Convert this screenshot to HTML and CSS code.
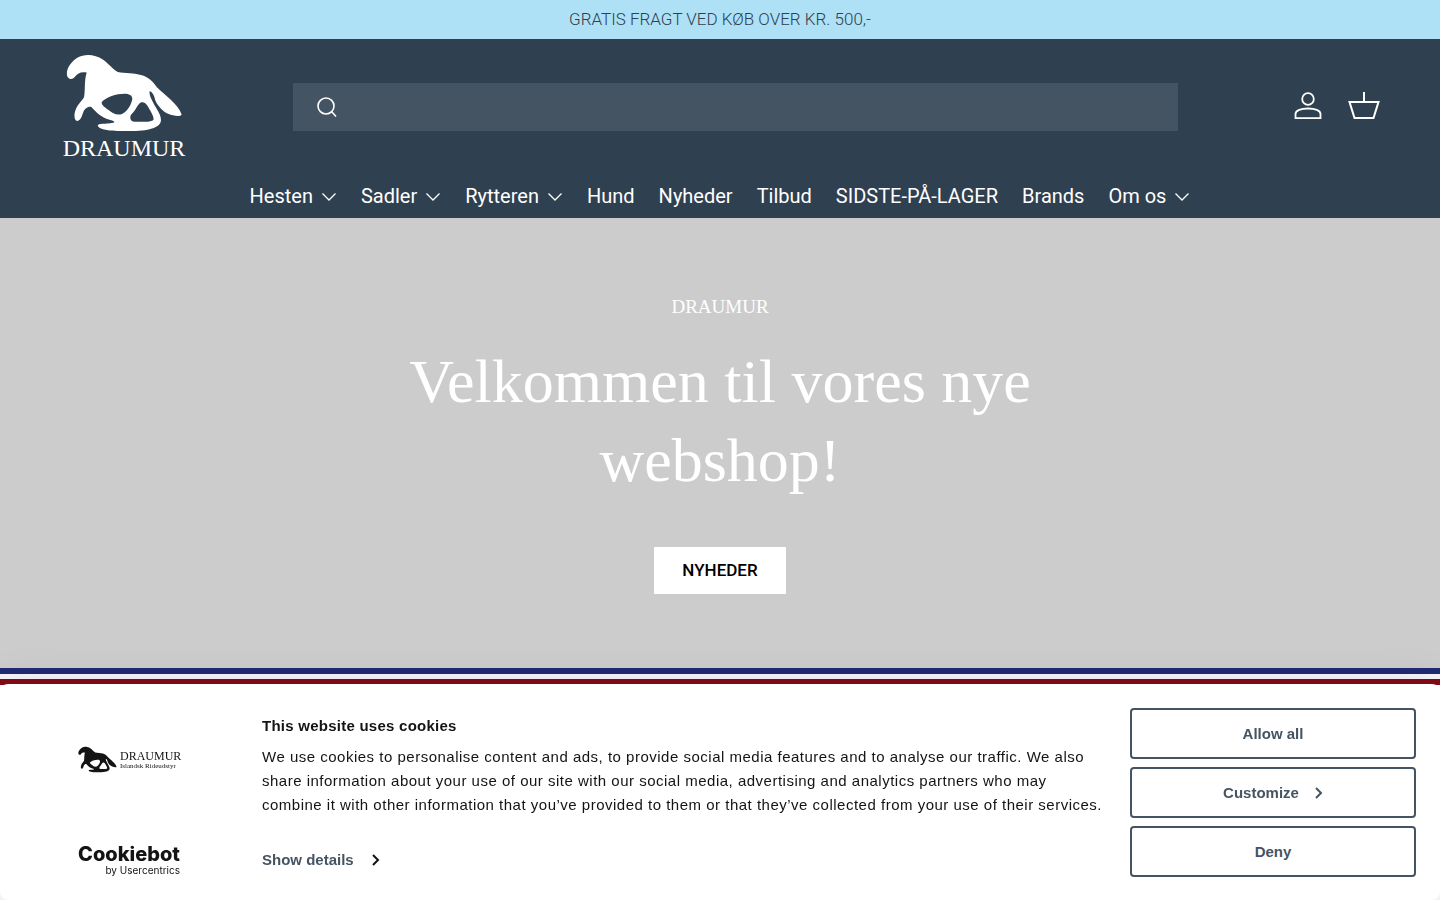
FILE: index.html
```html
<!DOCTYPE html>
<html lang="da">
<head>
<meta charset="utf-8">
<meta name="viewport" content="width=device-width, initial-scale=1">
<title>Draumur</title>
<link rel="stylesheet" href="styles.css">
</head>
<body>
<svg class="defs" aria-hidden="true">
  <symbol id="horse" viewBox="50 42 350 232">
    <path fill="currentColor" fill-rule="evenodd" d="M53 105C50 85 65 65 85 52C105 40 138 42 160 58C178 70 188 86 205 95C225 100 255 96 280 106C300 113 312 127 322 141C345 165 385 190 396 222C392 231 360 226 345 215C330 203 322 192 317 180C315 168 310 157 301 152C297 160 304 174 311 187C320 205 335 222 334 240C333 262 295 272 240 272C190 272 150 270 145 256C147 247 165 252 192 247C200 245 190 240 180 238C155 232 140 215 126 200C118 197 108 203 103 212C98 225 95 240 84 242C72 240 74 218 80 205C86 190 100 180 104 170C108 150 104 120 112 97C95 93 85 99 78 108C72 118 56 120 53 105ZM157 185C170 170 200 160 225 160C240 160 250 165 248 178C243 198 230 218 213 222C198 224 185 215 175 207C165 200 155 192 157 185ZM272 187C285 182 290 190 296 200C302 212 312 225 312 237C308 246 270 245 250 243C242 240 240 230 245 222C258 212 262 195 272 187Z"/>
  </symbol>
  <symbol id="chevron" viewBox="0 0 16 16"><path d="M1.500 4.500L8 11L14.500 4.500" fill="none" stroke="currentColor" stroke-width="1.300"/></symbol>
  <symbol id="arrow" viewBox="0 0 8 12"><path d="M1 1L6 6L1 11" fill="none" stroke="currentColor" stroke-width="2"/></symbol>
</svg>

<div class="announcement">GRATIS FRAGT VED KØB OVER KR. 500,-</div>

<header class="header">
  <div class="header-top">
    <a class="logo" href="#" aria-label="Draumur">
      <svg class="logo-horse"><use href="#horse"/></svg>
      <span class="logo-name">DRAUMUR</span>
    </a>
    <form class="search">
      <button class="search-button" type="submit" aria-label="Søg">
        <svg width="24" height="24" viewBox="0 0 24 24" fill="none" stroke="currentColor" stroke-width="1.600"><circle cx="11" cy="11" r="8"/><path d="M16.500 16.500L21 21.500"/></svg>
      </button>
      <input class="search-input" type="search" aria-label="Søg i butikken">
    </form>
    <div class="tools">
      <a href="#" aria-label="Log ind">
        <svg width="32" height="32" viewBox="0 0 32 32" fill="none" stroke="currentColor" stroke-width="1.800"><circle cx="16" cy="8" r="5.800"/><path d="M3.500 27.200V23C3.500 19.500 9 17.500 16 17.500S28.500 19.500 28.500 23V27.200Z"/></svg>
      </a>
      <a href="#" aria-label="Indkøbskurv">
        <svg width="32" height="32" viewBox="0 0 32 32" fill="none" stroke="currentColor" stroke-width="2"><path d="M1.500 11H30.500L25.500 27H6.500ZM16 11V1"/></svg>
      </a>
    </div>
  </div>
  <nav class="nav">
    <a href="#">Hesten<svg><use href="#chevron"/></svg></a>
    <a href="#">Sadler<svg><use href="#chevron"/></svg></a>
    <a href="#">Rytteren<svg><use href="#chevron"/></svg></a>
    <a href="#">Hund</a>
    <a href="#">Nyheder</a>
    <a href="#">Tilbud</a>
    <a href="#">SIDSTE-PÅ-LAGER</a>
    <a href="#">Brands</a>
    <a href="#">Om os<svg><use href="#chevron"/></svg></a>
  </nav>
</header>

<main>
  <section class="hero">
    <p class="hero-tag">DRAUMUR</p>
    <h1 class="hero-title">Velkommen til vores nye webshop!</h1>
    <a class="hero-button" href="#">NYHEDER</a>
  </section>
  <div class="stripes"></div>
</main>

<section class="cookies" role="dialog" aria-labelledby="cookies-title">
  <div class="cookies-brand">
    <div class="brand">
      <svg class="brand-horse"><use href="#horse"/></svg>
      <div class="brand-text"><span class="brand-name">DRAUMUR</span><span class="brand-sub">Islandsk Rideudstyr</span></div>
    </div>
    <a class="cookiebot" href="#"><span class="cookiebot-name">Cookiebot</span><span class="cookiebot-by">by Usercentrics</span></a>
  </div>
  <div class="cookies-body">
    <h2 class="cookies-title" id="cookies-title">This website uses cookies</h2>
    <p class="cookies-text">We use cookies to personalise content and ads, to provide social media features and to analyse our traffic. We also share information about your use of our site with our social media, advertising and analytics partners who may combine it with other information that you’ve provided to them or that they’ve collected from your use of their services.</p>
    <a class="details" href="#">Show details<svg><use href="#arrow"/></svg></a>
  </div>
  <div class="cookies-actions">
    <button type="button">Allow all</button>
    <button type="button">Customize<svg><use href="#arrow"/></svg></button>
    <button type="button">Deny</button>
  </div>
</section>
</body>
</html>
```
FILE: styles.css
```css
* { box-sizing: border-box; }
body {
  margin: 0;
  background: #fff;
  font-family: Roboto, "Liberation Sans", sans-serif;
}
a { color: inherit; text-decoration: none; }
button { font: inherit; cursor: pointer; }
svg { display: block; flex: none; }
.defs { position: absolute; width: 0; height: 0; }

.announcement {
  padding: 8px 20px;
  background: #aee1f5;
  color: #2f4050;
  font-size: 17px;
  font-weight: 300;
  line-height: 23px;
  text-align: center;
}

.header { background: #2f4050; color: #fff; }
.header-top {
  display: flex;
  align-items: center;
  padding: 14px 60px 0;
}
.logo {
  display: flex;
  flex-direction: column;
  align-items: center;
  width: 128px;
  padding-top: 1px;
}
.logo-horse { width: 117px; height: 78px; }
.logo-name {
  margin-top: 3px;
  font-family: "Liberation Serif", serif;
  font-size: 24px;
  line-height: 26px;
}
.search {
  display: flex;
  flex: 1;
  height: 48px;
  margin: 0 114px 0 105px;
  background: #455463;
}
.search-button {
  display: flex;
  align-items: center;
  padding: 0 8px 0 22px;
  border: 0;
  background: none;
  color: #fff;
}
.search-input {
  flex: 1;
  min-width: 0;
  border: 0;
  outline: 0;
  background: none;
  color: #fff;
  font: inherit;
  font-size: 18px;
}
.tools { display: flex; gap: 24px; }
.nav {
  display: flex;
  flex-wrap: wrap;
  justify-content: center;
  gap: 0 24px;
  padding: 19px 60px 6px;
  font-size: 20px;
  line-height: 32px;
}
.nav a { display: flex; align-items: center; }
.nav svg { width: 16px; height: 16px; margin: 2px 0 0 8px; }

.hero {
  display: flex;
  flex-direction: column;
  align-items: center;
  padding: 75px 20px 74px;
  background: #ccc;
  color: #fff;
  text-align: center;
}
.hero-tag {
  margin: 0;
  font-family: "Liberation Serif", serif;
  font-size: 19px;
  line-height: 28px;
}
.hero-title {
  max-width: 700px;
  margin: 21px 0 47px;
  font-family: "Liberation Serif", serif;
  font-size: 62px;
  font-weight: 400;
  line-height: 79px;
}
.hero-button {
  padding: 12px 28px;
  background: #fff;
  color: #000;
  font-size: 17px;
  font-weight: 500;
  line-height: 23px;
}
.stripes {
  height: 17px;
  background: linear-gradient(#212b73 6px, #f8f4fc 6px, #f8f4fc 11px, #840b18 11px);
}

.cookies {
  position: fixed;
  right: 0;
  bottom: 0;
  left: 0;
  display: flex;
  padding: 24px;
  border-radius: 8px;
  background: #fff;
  box-shadow: 0 8px 48px rgba(0, 0, 0, 0.15);
  color: #141414;
  font-family: "Liberation Sans", sans-serif;
  font-size: 15px;
  line-height: 24px;
}
.cookies-brand {
  display: flex;
  flex-direction: column;
  justify-content: space-between;
  width: 238px;
  padding: 38px 54px 0;
}
.brand { display: flex; align-items: center; gap: 3px; }
.brand-horse { width: 39px; height: 27px; }
.brand-text {
  display: flex;
  flex-direction: column;
  padding-top: 2px;
  font-family: "Liberation Serif", serif;
  white-space: nowrap;
}
.brand-name { font-size: 12px; line-height: 11px; }
.brand-sub { font-size: 7px; line-height: 8px; }
.cookiebot {
  display: flex;
  flex-direction: column;
  align-items: flex-end;
  width: 102px;
  font-family: Inter, "Liberation Sans", sans-serif;
}
.cookiebot-name { font-size: 20px; font-weight: 800; line-height: 21px; }
.cookiebot-by { font-size: 10px; line-height: 11px; }
.cookies-body {
  display: flex;
  flex: 1;
  flex-direction: column;
  align-items: flex-start;
  padding: 6px 24px 4px 0;
}
.cookies-title {
  margin: 0 0 7px;
  font-size: 15px;
  line-height: 24px;
  letter-spacing: 0.25px;
}
.cookies-text { margin: 0; letter-spacing: 0.5px; }
.details {
  display: flex;
  align-items: center;
  gap: 18px;
  margin-top: auto;
  color: #455463;
  font-weight: 700;
}
.details svg { width: 8px; height: 12px; color: #141414; }
.cookies-actions {
  display: grid;
  grid-template-rows: 51px 51px 51px;
  row-gap: 8px;
  width: 286px;
  margin-bottom: -1px;
}
.cookies-actions button {
  display: flex;
  align-items: center;
  justify-content: center;
  gap: 16px;
  border: 2px solid #455463;
  border-radius: 4px;
  background: #fff;
  color: #455463;
  font-weight: 700;
}
.cookies-actions svg { width: 8px; height: 12px; }
```
